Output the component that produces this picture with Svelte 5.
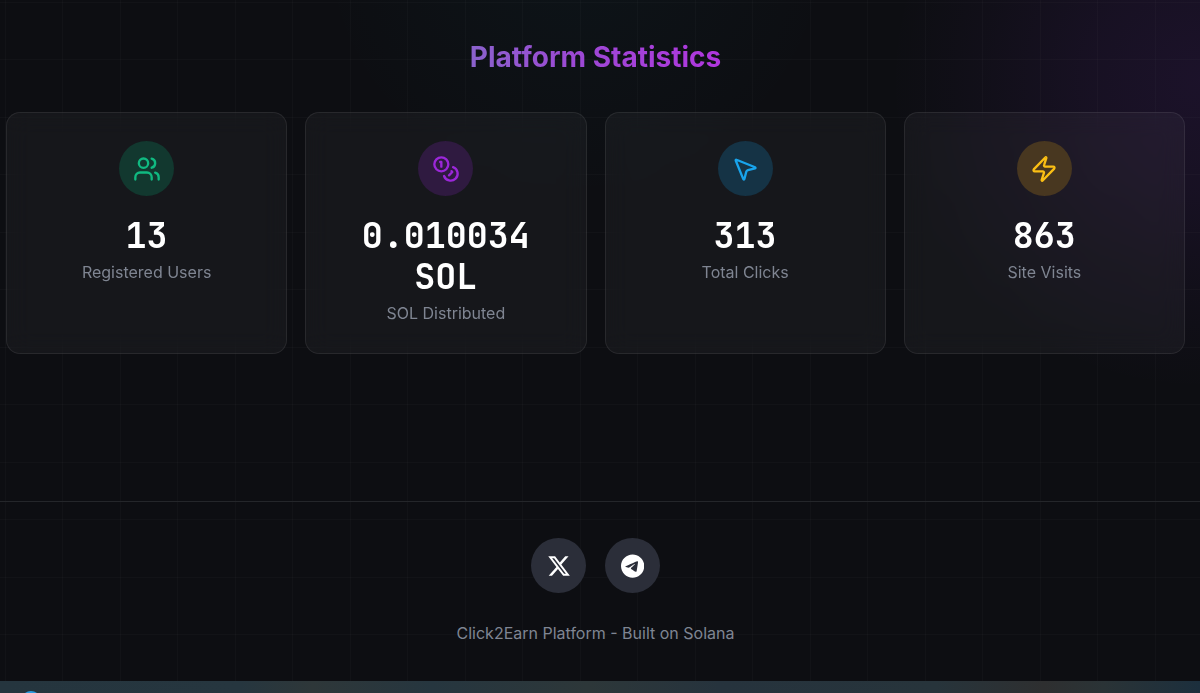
<script>
  const stats = [
    { icon: 'users', tone: 'green', value: '13', label: 'Registered Users' },
    { icon: 'coins', tone: 'purple', value: '0.010034 SOL', label: 'SOL Distributed' },
    { icon: 'pointer', tone: 'blue', value: '313', label: 'Total Clicks' },
    { icon: 'zap', tone: 'yellow', value: '863', label: 'Site Visits' }
  ];

  const strokes = {
    users: [
      'M16 21v-2a4 4 0 0 0-4-4H6a4 4 0 0 0-4 4v2',
      'M5 7a4 4 0 1 0 8 0a4 4 0 1 0-8 0',
      'M22 21v-2a4 4 0 0 0-3-3.87',
      'M16 3.13a4 4 0 0 1 0 7.75'
    ],
    coins: [
      'M2 8a6 6 0 1 0 12 0a6 6 0 1 0-12 0',
      'M18.09 10.37A6 6 0 1 1 10.34 18',
      'M7 6h1v4',
      'm16.71 13.88.7.71-2.82 2.82'
    ],
    pointer: [
      'M4.037 4.688a.495.495 0 0 1 .651-.651l16 6.5a.5.5 0 0 1-.063.947l-6.124 1.58a2 2 0 0 0-1.438 1.435l-1.579 6.126a.5.5 0 0 1-.947.063z'
    ],
    zap: [
      'M4 14a1 1 0 0 1-.78-1.63l9.9-10.2a.5.5 0 0 1 .86.46l-1.92 6.02A1 1 0 0 0 13 10h7a1 1 0 0 1 .78 1.63l-9.9 10.2a.5.5 0 0 1-.86-.46l1.92-6.02A1 1 0 0 0 11 14z'
    ]
  };
</script>

<div class="page">
  <main>
    <h2>Platform Statistics</h2>
    <div class="stats">
      {#each stats as stat}
        <article class="card">
          <span class="badge {stat.tone}">
            <svg viewBox="0 0 24 24" aria-hidden="true">
              {#each strokes[stat.icon] as d}
                <path {d} />
              {/each}
            </svg>
          </span>
          <p class="value">{stat.value}</p>
          <p class="label">{stat.label}</p>
        </article>
      {/each}
    </div>
  </main>

  <footer>
    <nav>
      <a href="#x" aria-label="X">
        <svg viewBox="0 0 512 512" aria-hidden="true">
          <path d="M389.2 48h70.6L305.6 224.2 487 464H345L233.7 318.6 106.5 464H35.8L200.7 275.5 26.8 48H172.4L272.9 180.9 389.2 48zM364.4 421.8h39.1L151.1 88h-42L364.4 421.8z" />
        </svg>
      </a>
      <a href="#telegram" aria-label="Telegram">
        <svg viewBox="0 0 496 512" aria-hidden="true">
          <path d="M248,8C111.033,8,0,119.033,0,256S111.033,504,248,504,496,392.967,496,256,384.967,8,248,8ZM362.952,176.66c-3.732,39.215-19.881,134.378-28.1,178.3-3.476,18.584-10.322,24.816-16.948,25.425-14.4,1.326-25.338-9.517-39.287-18.661-21.827-14.308-34.158-23.215-55.346-37.177-24.485-16.135-8.612-25,5.342-39.5,3.652-3.793,67.107-61.51,68.335-66.746.153-.655.3-3.1-1.154-4.384s-3.59-.849-5.135-.5q-3.283.746-104.608,69.142-14.845,10.194-26.894,9.934c-8.855-.191-25.888-5.006-38.551-9.123-15.531-5.048-27.875-7.717-26.8-16.291q.84-6.7,18.45-13.7,108.446-47.248,144.628-62.3c68.872-28.647,83.183-33.623,92.511-33.789,2.052-.034,6.639.474,9.61,2.885a10.452,10.452,0,0,1,3.53,6.716A43.765,43.765,0,0,1,362.952,176.66Z" />
        </svg>
      </a>
    </nav>
    <p>Click2Earn Platform - Built on Solana</p>
  </footer>

  <div class="taskbar"><span class="app"></span></div>
</div>

<style>
  :global(body) {
    background: #0d0e12;
  }

  .page {
    --line: rgba(255, 255, 255, 0.02);
    min-height: 100vh;
    display: flex;
    flex-direction: column;
    font-family: Inter, sans-serif;
    color: #fff;
    /* 115px tiles with two rules each, over the two corner glows */
    background-color: #0d0e12;
    background-image:
      linear-gradient(to right, var(--line) 1px, transparent 1px 58px, var(--line) 58px 59px, transparent 59px),
      linear-gradient(to bottom, var(--line) 1px, transparent 1px 57px, var(--line) 57px 58px, transparent 58px),
      radial-gradient(circle at 100% 80px, rgba(147, 51, 234, 0.11), rgba(147, 51, 234, 0.08) 110px, rgba(147, 51, 234, 0.03) 220px, transparent 310px),
      radial-gradient(circle at 48% -60px, rgba(16, 170, 185, 0.04), transparent 260px);
    background-size: 115px 115px, 115px 115px, auto, auto;
    background-position: 62px 0, 0 2px, 0 0, 0 0;
    background-repeat: repeat, repeat, no-repeat, no-repeat;
  }

  h2,
  p {
    margin: 0;
  }

  main {
    padding: 37px 15px 147px 6px;
    display: flex;
    flex-direction: column;
    align-items: center;
    gap: 34px;
  }

  h2 {
    font-size: 28px;
    line-height: 41px;
    font-weight: 700;
    background: linear-gradient(90deg, #8b62cc, #9c4ad4 40%, #b036de);
    background-clip: text;
    -webkit-background-clip: text;
    color: transparent;
  }

  .stats {
    width: 100%;
    display: grid;
    grid-template-columns: repeat(4, 1fr);
    gap: 18px;
  }

  .card {
    padding: 28px;
    display: flex;
    flex-direction: column;
    align-items: center;
    text-align: center;
    border: 1px solid rgba(255, 255, 255, 0.08);
    border-radius: 14px;
    background: rgba(255, 255, 255, 0.04);
    backdrop-filter: blur(12px);
  }

  .badge {
    width: 55px;
    height: 55px;
    margin-bottom: 19px;
    display: grid;
    place-items: center;
    border-radius: 50%;
  }

  .badge svg {
    width: 28px;
    height: 28px;
    fill: none;
    stroke: currentColor;
    stroke-width: 2;
    stroke-linecap: round;
    stroke-linejoin: round;
  }

  .green {
    color: #10b981;
    background: #12382f;
  }

  .purple {
    color: #9b27d8;
    background: #2f1a40;
  }

  .blue {
    color: #18a4ec;
    background: #153345;
  }

  .yellow {
    color: #fbbf14;
    background: #483720;
  }

  .value {
    margin-bottom: 5px;
    font-family: "JetBrains Mono", "DejaVu Sans Mono", monospace;
    font-size: 35px;
    line-height: 41px;
    font-weight: 700;
  }

  .label,
  footer p {
    font-size: 16px;
    line-height: 23px;
    color: #7f8592;
  }

  footer {
    padding: 36px 9px 36px 0;
    display: flex;
    flex-direction: column;
    align-items: center;
    gap: 29px;
    border-top: 1px solid #24262a;
  }

  nav {
    display: flex;
    gap: 19px;
  }

  nav a {
    width: 55px;
    height: 55px;
    display: grid;
    place-items: center;
    border-radius: 50%;
    color: #fff;
    background: #2b2e39;
  }

  nav svg {
    height: 24px;
    fill: currentColor;
  }

  .taskbar {
    flex: 1;
    min-height: 12px;
    position: relative;
    overflow: hidden;
    background: linear-gradient(90deg, #25353e, #26363f 20%, #2e3739 26%, #26363f 36%, #2d3739 49%, #26333d 60%, #27343b 78%, #2e2f30 87%, #2a3336 92%, #1c2f3d);
  }

  .app {
    position: absolute;
    top: 10px;
    left: 21px;
    width: 20px;
    height: 20px;
    border-radius: 50%;
    background: #2b9be0;
  }
</style>
